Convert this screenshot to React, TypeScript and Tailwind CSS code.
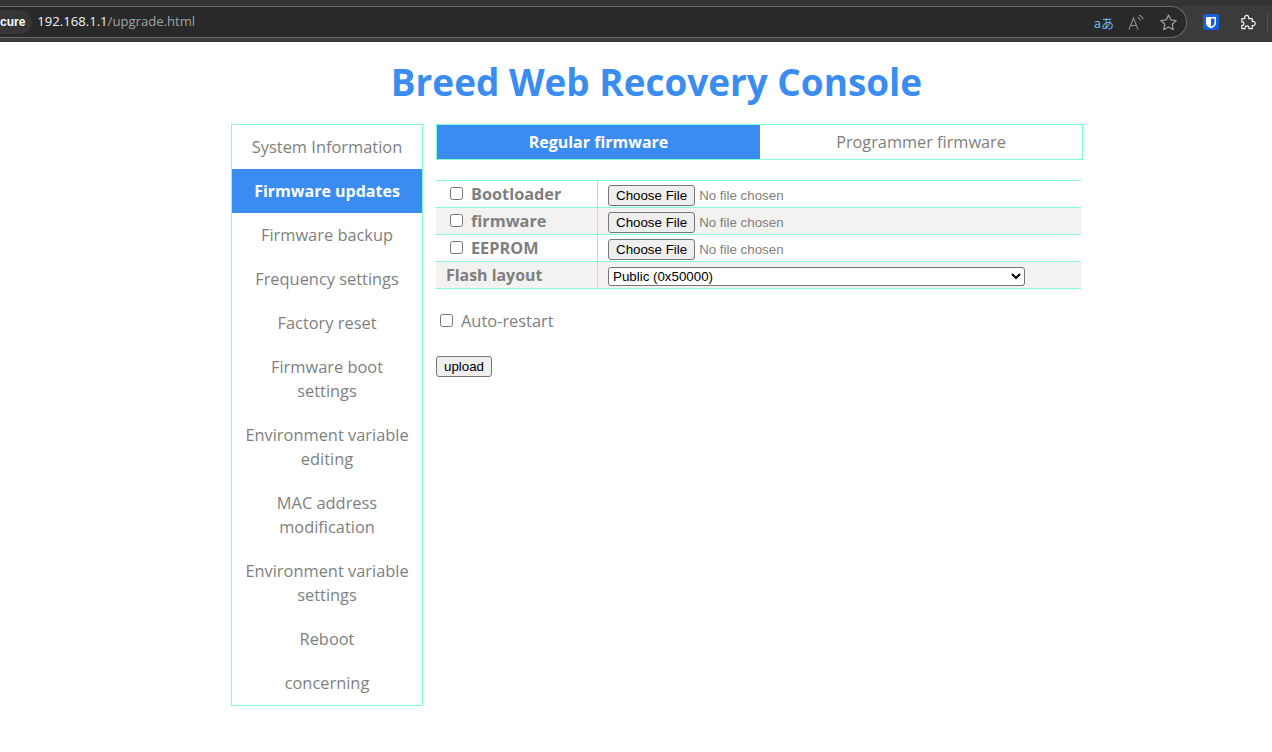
const menu = [
  "System Information",
  "Firmware updates",
  "Firmware backup",
  "Frequency settings",
  "Factory reset",
  "Firmware boot settings",
  "Environment variable editing",
  "MAC address modification",
  "Environment variable settings",
  "Reboot",
  "concerning",
];

const FONT = "font-['Open_Sans','Noto_Sans',sans-serif]";
const NATIVE = "font-['Liberation_Sans',Arial,sans-serif] text-[13.33px]";

function BrowserBar() {
  return (
    <div className="relative flex h-[42px] flex-col bg-[#3b3b3b]">
      <div className="h-[6px] bg-[#333333]" />
      <div className="relative mr-[85px] flex h-[32px] items-center rounded-r-[16px] border-y border-r border-[#6b6b6b] bg-[#292929]">
        <div className="flex h-[24px] items-center rounded-r-[12px] bg-[#363636] pr-[7px] font-['Liberation_Sans',sans-serif] text-[12px] font-bold text-white">
          cure
        </div>
        <div className="ml-[5px] font-['Open_Sans',sans-serif] text-[13.1px] text-[#f2f2f2]">
          192.168.1.1<span className="text-[#a3a3a3]">/upgrade.html</span>
        </div>
        <div className="ml-auto mr-[8px] flex items-center">
          <span className="font-['Noto_Sans_CJK_JP',sans-serif] text-[13px] leading-none text-[#6db5ee]">aあ</span>
          <svg className="ml-[14px]" width="17" height="17" viewBox="0 0 17 17" fill="none" stroke="#8c8c8c" strokeWidth="1.1">
            <path d="M1 15.500 5.500 4 10 15.500M2.800 11.500h5.500" />
            <path d="M9.500 3.500c1.500.3 2.500 1.200 3 3M11 1.300c2 .4 3.500 1.800 4 4" />
          </svg>
          <svg className="ml-[14px]" width="19" height="19" viewBox="0 0 24 24" fill="none" stroke="#9a9a9a" strokeWidth="1.6" strokeLinejoin="round">
            <path d="m12 2.500 2.900 6.200 6.800.8-5 4.700 1.300 6.800-6-3.400-6 3.400 1.300-6.800-5-4.700 6.800-.8z" />
          </svg>
        </div>
      </div>
      <div className="absolute right-[4px] top-[13px] flex items-center">
        <div className="flex h-[16px] w-[16px] items-center justify-center rounded-[2px] bg-[#175ddc]">
          <svg width="12" height="13" viewBox="0 0 12 13">
            <path d="M1 1h10v6c0 3-3 4.500-5 5.500C4 11.500 1 10 1 7z" fill="#fff" />
            <path d="M6 2.500h3.500V7c0 1.800-2 3-3.500 3.800z" fill="#175ddc" />
          </svg>
        </div>
        <svg className="ml-[20px]" width="17" height="17" viewBox="0 0 18 18" fill="none" stroke="#f0f0f0" strokeWidth="1.3" strokeLinejoin="round">
          <path d="M3 5h3.200c-.6-2 .4-3.500 2-3.500s2.600 1.500 2 3.500H14v3c2-.6 3.200.3 3.200 2s-1.200 2.600-3.200 2v3.500h-3.500c.5-2-.5-3-2-3s-2.500 1-2 3H3v-3.500c1.500.3 2.200-.5 2.200-2S4.500 8.200 3 8.500z" />
        </svg>
        <div className="ml-[11px] h-[18px] w-px bg-[#555555]" />
      </div>
    </div>
  );
}

function Sidebar() {
  return (
    <ul className="w-[192px] border border-[#7fffd4] text-center text-[16.4px] leading-[24px] text-[#7f7f7f]">
      {menu.map((item) => (
        <li
          key={item}
          className={
            item === "Firmware updates"
              ? "bg-[#3b8cf0] px-[10px] py-[10px] text-[16px] font-bold text-white"
              : "px-[10px] py-[10px]"
          }
        >
          {item}
        </li>
      ))}
    </ul>
  );
}

function FileRow({ label, shaded }: { label: string; shaded?: boolean }) {
  return (
    <div className={`flex h-[27px] border-b border-[#7fffd4] ${shaded ? "bg-[#f3f2f1]" : ""}`}>
      <label className="flex w-[162px] items-center border-r border-[#7fffd4] pl-[14px] text-[16.3px] font-bold">
        <input type="checkbox" className="mr-[8px] mb-[2px] h-[13px] w-[13px]" />
        {label}
      </label>
      <div className="flex items-center pt-[2px] pl-[10px]">
        <input
          type="file"
          className={`${NATIVE} w-[200px] text-[#7f7f7f] file:mr-[4px] file:h-[21px] file:rounded-[3px] file:border file:border-[#767676] file:bg-[#efefef] file:px-[7px] file:text-black`}
        />
      </div>
    </div>
  );
}

function FirmwarePanel() {
  return (
    <div className="w-[647px]">
      <div className="flex h-[36px] border border-[#7fffd4] text-[16.3px]">
        <div className="flex w-[323px] items-center justify-center bg-[#3b8cf0] text-[16px] font-bold text-white">
          Regular firmware
        </div>
        <div className="flex flex-1 items-center justify-center">Programmer firmware</div>
      </div>

      <div className="mt-[20px] w-[645px] border-t border-[#7fffd4]">
        <FileRow label="Bootloader" />
        <FileRow label="firmware" shaded />
        <FileRow label="EEPROM" />
        <div className="flex h-[27px] border-b border-[#7fffd4] bg-[#f3f2f1]">
          <div className="flex w-[162px] items-center border-r border-[#7fffd4] pt-[1px] pl-[10px] text-[15.9px] font-bold">
            Flash layout
          </div>
          <div className="flex items-center pt-[2px] pl-[10px]">
            <select className={`${NATIVE} h-[19px] w-[417px] rounded-[3px] border border-[#767676] bg-white text-black`}>
              <option>Public (0x50000)</option>
            </select>
          </div>
        </div>
      </div>

      <label className="mt-[20px] flex h-[24px] items-center pl-[4px] text-[16.4px]">
        <input type="checkbox" className="mr-[8px] mb-[2px] h-[13px] w-[13px]" />
        Auto-restart
      </label>

      <button className={`${NATIVE} mt-[23px] block h-[21px] w-[56px] rounded-[3px] border border-[#767676] bg-[#efefef] text-black`}>
        upload
      </button>
    </div>
  );
}

export default function App() {
  return (
    <div className={`relative h-[752px] overflow-hidden bg-white ${FONT} text-[#7f7f7f]`}>
      <BrowserBar />
      <div className="ml-[231px] w-[852px]">
        <h1 className="mt-[14px] h-[68px] pr-[1px] text-center text-[36.9px] leading-[52px] font-bold text-[#3b8cf0]">
          Breed Web Recovery Console
        </h1>
        <div className="flex items-start gap-[13px]">
          <Sidebar />
          <FirmwarePanel />
        </div>
      </div>
    </div>
  );
}
